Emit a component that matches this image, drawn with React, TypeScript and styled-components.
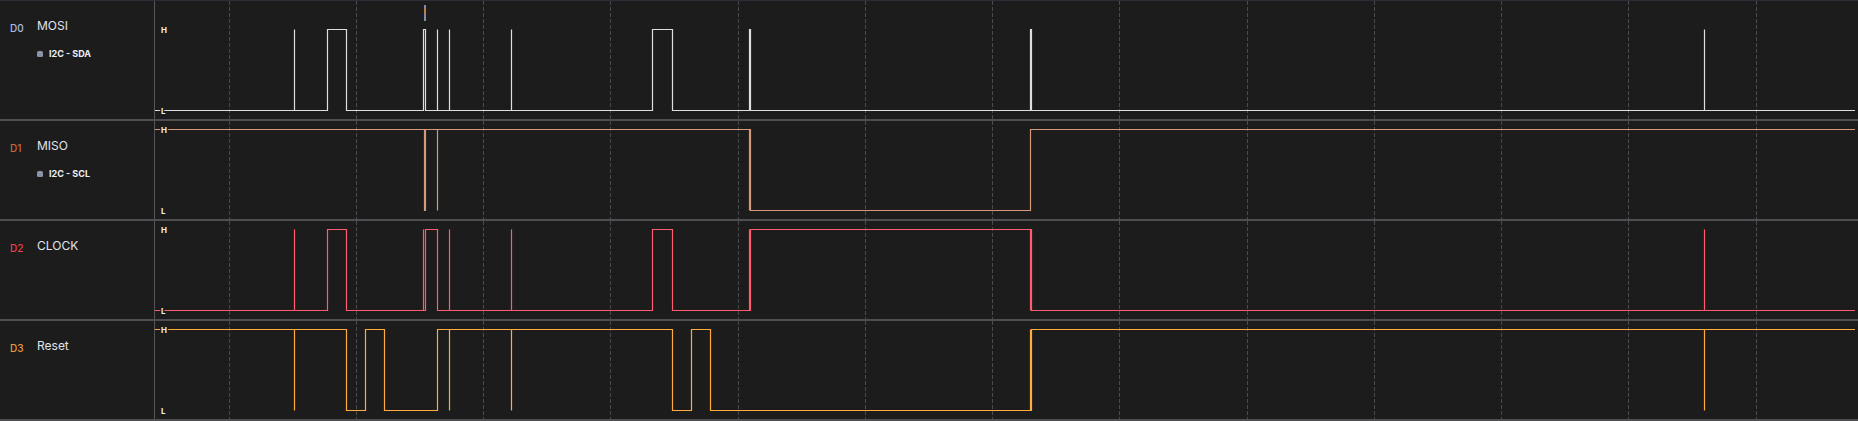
import React from "react";
import styled, { createGlobalStyle } from "styled-components";

const GlobalStyle = createGlobalStyle`
  html, body { margin: 0; padding: 0; background: #1c1c1c; }
  body { font-family: Inter, "Noto Sans", "Liberation Sans", sans-serif; }
`;

const PLOT_LEFT = 155;
const PLOT_W = 1703;
const SIGNAL_END = 1855 - PLOT_LEFT;
const GRID_X = Array.from({ length: 13 }, (_, k) => Math.floor(229 + k * 127.25) - PLOT_LEFT + 0.5);

type Level = "H" | "L";
type Ev = { x: number; t: "spike" | "toggle"; w?: number };

type Channel = {
  id: string;
  name: string;
  idColor: string;
  lineColor: string;
  decoder?: string;
  start: Level;
  events: Ev[];
};

const s = (x: number, w?: number): Ev => ({ x, t: "spike", w });
const t = (x: number, w?: number): Ev => ({ x, t: "toggle", w });

const channels: Channel[] = [
  {
    id: "D0",
    name: "MOSI",
    idColor: "#a9bde0",
    lineColor: "#dedede",
    decoder: "I2C - SDA",
    start: "L",
    events: [s(294), t(327), t(346), s(423, 2), s(437), s(449), s(511), t(652), t(672), s(749, 1), s(1030, 1), s(1704)],
  },
  {
    id: "D1",
    name: "MISO",
    idColor: "#c8683e",
    lineColor: "#d59a7c",
    decoder: "I2C - SCL",
    start: "H",
    events: [s(424, 1), s(437), t(749, 1), t(1030)],
  },
  {
    id: "D2",
    name: "CLOCK",
    idColor: "#e8424f",
    lineColor: "#ff5c70",
    start: "L",
    events: [s(294), t(327), t(346), t(423, 2), t(437), s(449), s(511), t(652), t(672), t(749, 1), t(1030, 1), s(1704)],
  },
  {
    id: "D3",
    name: "Reset",
    idColor: "#e89c3c",
    lineColor: "#ffab40",
    start: "H",
    events: [s(294), t(346), t(365), t(384), t(437), s(449), s(511), t(672), t(691), t(710), t(1030, 1), s(1704)],
  },
];

function buildPath(start: Level, events: Ev[], yH: number, yL: number) {
  let lvl: Level = start;
  const y = (l: Level) => (l === "H" ? yH : yL);
  const flip = (l: Level): Level => (l === "H" ? "L" : "H");
  let d = `M0 ${y(lvl)}`;
  for (const e of events) {
    const x = e.x - PLOT_LEFT + 0.5;
    const o = flip(lvl);
    if (e.t === "spike") {
      d += ` H${x} V${y(o)}`;
      if (e.w) d += ` H${x + e.w}`;
      d += ` V${y(lvl)}`;
    } else {
      d += ` H${x} V${y(o)}`;
      if (e.w) d += ` V${y(lvl)} H${x + e.w} V${y(o)}`;
      lvl = o;
    }
  }
  d += ` H${SIGNAL_END}`;
  return d;
}

const Frame = styled.div`
  width: 1858px;
  height: 421px;
  display: flex;
  flex-direction: column;
  border-top: 1px solid #2d2d35;
  box-sizing: border-box;
  background: #1c1c1c;
  overflow: hidden;
`;

const ChannelRow = styled.div<{ $height: number }>`
  display: flex;
  height: ${(p) => p.$height}px;
  border-bottom: 2px solid #4e4e53;
  flex: none;
`;

const LabelPane = styled.div`
  width: 154px;
  flex: none;
  border-right: 1px solid #56565a;
  box-sizing: content-box;
  padding: 17px 0 0 10px;
  box-sizing: border-box;
  width: 155px;
  display: grid;
  grid-template-columns: 27px 1fr;
  grid-auto-rows: min-content;
  row-gap: 14px;
`;

const ChannelId = styled.span<{ $color: string }>`
  margin-top: 4px;
  font-size: 10px;
  font-weight: 500;
  color: ${(p) => p.$color};
  line-height: 12px;
`;

const ChannelName = styled.span`
  font-size: 12px;
  font-weight: 400;
  color: #e2e4ec;
  line-height: 15px;
`;

const DecoderTag = styled.div`
  grid-column: 2;
  display: flex;
  align-items: center;
  gap: 6px;
  font-size: 9px;
  font-weight: 700;
  color: #eceef4;
  line-height: 11px;
`;

const DecoderSwatch = styled.span`
  width: 6px;
  height: 6px;
  border-radius: 1.5px;
  background: #8a93a8;
  flex: none;
`;

const PlotPane = styled.div`
  flex: 1;
  position: relative;
  overflow: hidden;
`;

const Waveform = styled.svg`
  display: block;
`;

const LevelText = styled.text`
  font-family: Inter, "Liberation Sans", sans-serif;
  font-size: 8px;
  font-weight: 700;
  fill: #f0f0f0;
  stroke: #1c1c1c;
  stroke-width: 3px;
  paint-order: stroke;
`;

function ChannelPlot({ ch, height, top }: { ch: Channel; height: number; top: number }) {
  const yH = top + 0.5;
  const yL = top + 81.5;
  return (
    <Waveform width={PLOT_W} height={height} viewBox={`0 0 ${PLOT_W} ${height}`}>
      {GRID_X.map((x) => (
        <line key={x} x1={x} x2={x} y1={0} y2={height} stroke="#4a4a4d" strokeWidth={1} strokeDasharray="4 2" />
      ))}
      {ch.id === "D0" && (
        <g>
          <rect x={424 - PLOT_LEFT} y={4} width={2} height={16} fill="#7f8cab" />
          <rect x={424 - PLOT_LEFT} y={7} width={1} height={6} fill="#b47a4c" />
        </g>
      )}
      <path d={buildPath(ch.start, ch.events, yH, yL)} fill="none" stroke={ch.lineColor} strokeWidth={1.2} />
      <LevelText x={6} y={yH} dominantBaseline="central">H</LevelText>
      <LevelText x={6} y={yL} dominantBaseline="central">L</LevelText>
    </Waveform>
  );
}

export default function App() {
  return (
    <>
      <GlobalStyle />
      <Frame>
        {channels.map((ch, i) => {
          const h = i === 0 ? 118 : 98;
          return (
            <ChannelRow key={ch.id} $height={h}>
              <LabelPane>
                <ChannelId $color={ch.idColor}>{ch.id}</ChannelId>
                <ChannelName>{ch.name}</ChannelName>
                {ch.decoder && (
                  <DecoderTag>
                    <DecoderSwatch />
                    {ch.decoder}
                  </DecoderTag>
                )}
              </LabelPane>
              <PlotPane>
                <ChannelPlot ch={ch} height={h} top={i === 0 ? 28 : 8} />
              </PlotPane>
            </ChannelRow>
          );
        })}
      </Frame>
    </>
  );
}
